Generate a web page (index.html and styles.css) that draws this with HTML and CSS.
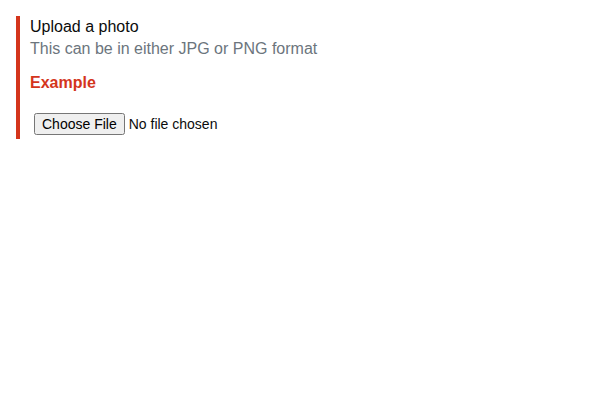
FILE: index.html
```html
<!DOCTYPE html>
<html>
<head>
<meta charset="utf-8">
<link rel="stylesheet" href="styles.css">
</head>
<body>
<div class="group">
  <label class="label" for="photo">Upload a photo</label>
  <div class="hint">This can be in either JPG or PNG format</div>
  <div class="error">Example</div>
  <input class="file" id="photo" type="file">
</div>
</body>
</html>
```
FILE: styles.css
```css
body {
  margin: 0;
  padding: 16px;
  font-family: "Liberation Sans", Arial, sans-serif;
  color: #0b0c0c;
}
.group {
  border-left: 4px solid #d4351c;
  padding-left: 10px;
  padding-top: 1px;
  display: flex;
  flex-direction: column;
  align-items: flex-start;
}
.label {
  font-size: 16px;
  line-height: 20px;
}
.hint {
  font-size: 16px;
  line-height: 20px;
  margin-top: 2px;
  color: #6c757d;
}
.error {
  font-size: 16px;
  line-height: 20px;
  font-weight: bold;
  color: #d4351c;
  margin-top: 14px;
  margin-bottom: 16px;
}
.file {
  font-family: "Liberation Sans", Arial, sans-serif;
  font-size: 14px;
  padding: 4px;
  margin: 0;
}
```
